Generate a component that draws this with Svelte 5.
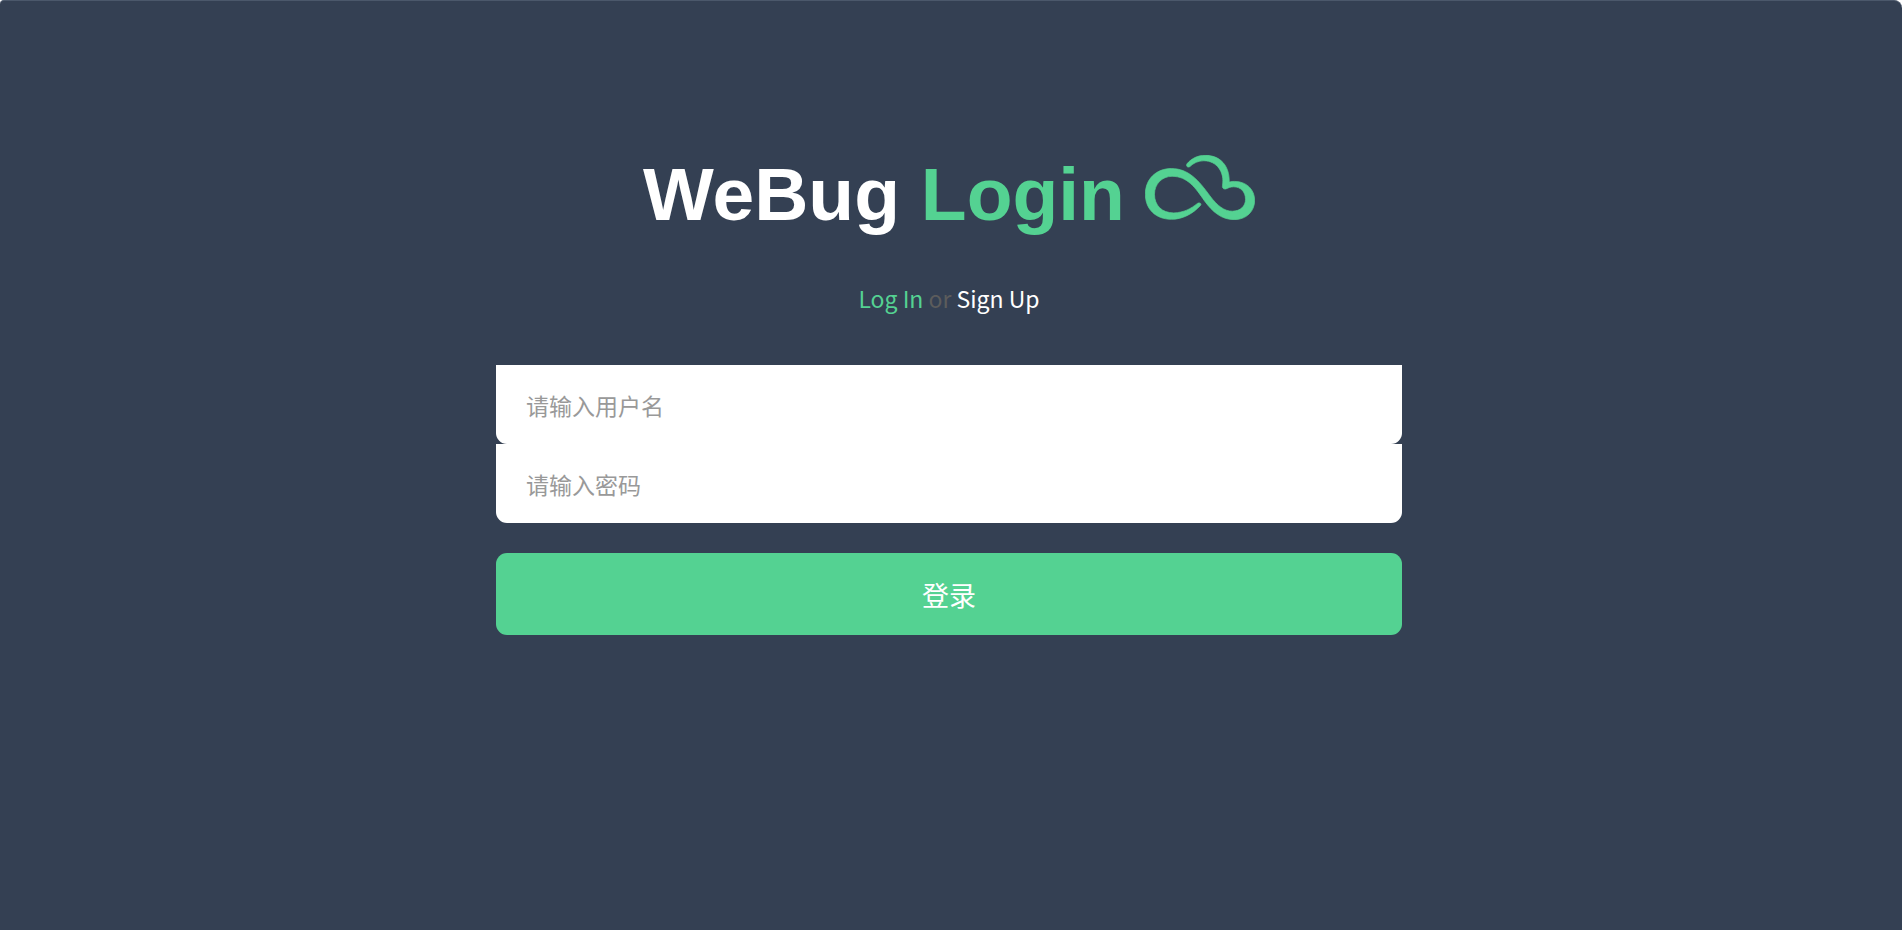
<script>
  let username = '';
  let password = '';
</script>

<main class="login-page">
  <header class="brand">
    <h1>WeBug <span>Login</span></h1>
    <svg class="cloud" viewBox="50 44 325 192" aria-hidden="true">
      <path
        d="M214 193C190 219 160 234 128 234C82 234 51 204 51 160C51 114 84 84 128 84C178 84 208 118 242 165C264 194 284 210 308 210C332 210 347 195 347 175C347 152 332 138 312 138C303 138 297 141 292 143C285 147 277 143 279 134C286 95 262 61 224 61C207 61 193 68 183 78C176 83 170 76 174 70C188 54 205 45 228 45C272 45 300 75 299 124C305 122 310 122 315 122C350 122 374 146 374 178C374 210 350 235 314 235C275 235 250 212 226 180C200 142 176 107 130 107C100 107 78 130 78 160C78 193 100 215 135 215C165 214 185 203 205 187C212 183 218 188 214 193Z"
      />
    </svg>
  </header>

  <nav class="switch">
    <a class="active" href="#login">Log In</a>
    or
    <a href="#signup">Sign Up</a>
  </nav>

  <form on:submit|preventDefault>
    <input
      type="text"
      name="username"
      placeholder="请输入用户名"
      aria-label="请输入用户名"
      bind:value={username}
    />
    <input
      type="password"
      name="password"
      placeholder="请输入密码"
      aria-label="请输入密码"
      bind:value={password}
    />
    <button type="submit">登录</button>
  </form>
</main>

<style>
  :global(body) {
    margin: 0;
    background: #fff;
  }

  .login-page {
    box-sizing: border-box;
    min-height: 100vh;
    padding: 149px 20px 40px 16px;
    display: flex;
    flex-direction: column;
    align-items: center;
    background: #344053;
    border-top: 1px solid #4b586b;
    border-radius: 4px 8px 0 0;
    font-family: 'Noto Sans CJK SC', sans-serif;
  }

  .brand {
    display: flex;
    gap: 20px;
  }

  h1 {
    margin: 0;
    color: #fff;
    font: 700 75px/88px 'Liberation Sans', Arial, sans-serif;
  }

  h1 span {
    color: #54d292;
  }

  .cloud {
    width: 110px;
    height: 65px;
    margin-top: 5px;
    fill: #54d292;
    stroke: #54d292;
    stroke-width: 2;
  }

  .switch {
    margin-top: 42px;
    color: #5c5c5c;
    font-size: 23px;
    line-height: 36px;
  }

  .switch a {
    color: #fff;
    text-decoration: none;
  }

  .switch .active {
    color: #54d292;
  }

  form {
    width: 100%;
    max-width: 906px;
    margin-top: 49px;
    display: flex;
    flex-direction: column;
  }

  input {
    box-sizing: border-box;
    width: 100%;
    height: 79px;
    padding: 0 30px;
    border: 0;
    border-radius: 0 0 11px 11px;
    background: #fff;
    color: #333;
    font-family: inherit;
    font-size: 23px;
  }

  input::placeholder {
    color: #999;
    opacity: 1;
  }

  button {
    height: 82px;
    margin-top: 30px;
    border: 0;
    border-radius: 11px;
    background: #54d292;
    color: #fff;
    font-family: inherit;
    font-size: 27px;
    cursor: pointer;
  }

  button:hover {
    background: #4bc488;
  }
</style>
